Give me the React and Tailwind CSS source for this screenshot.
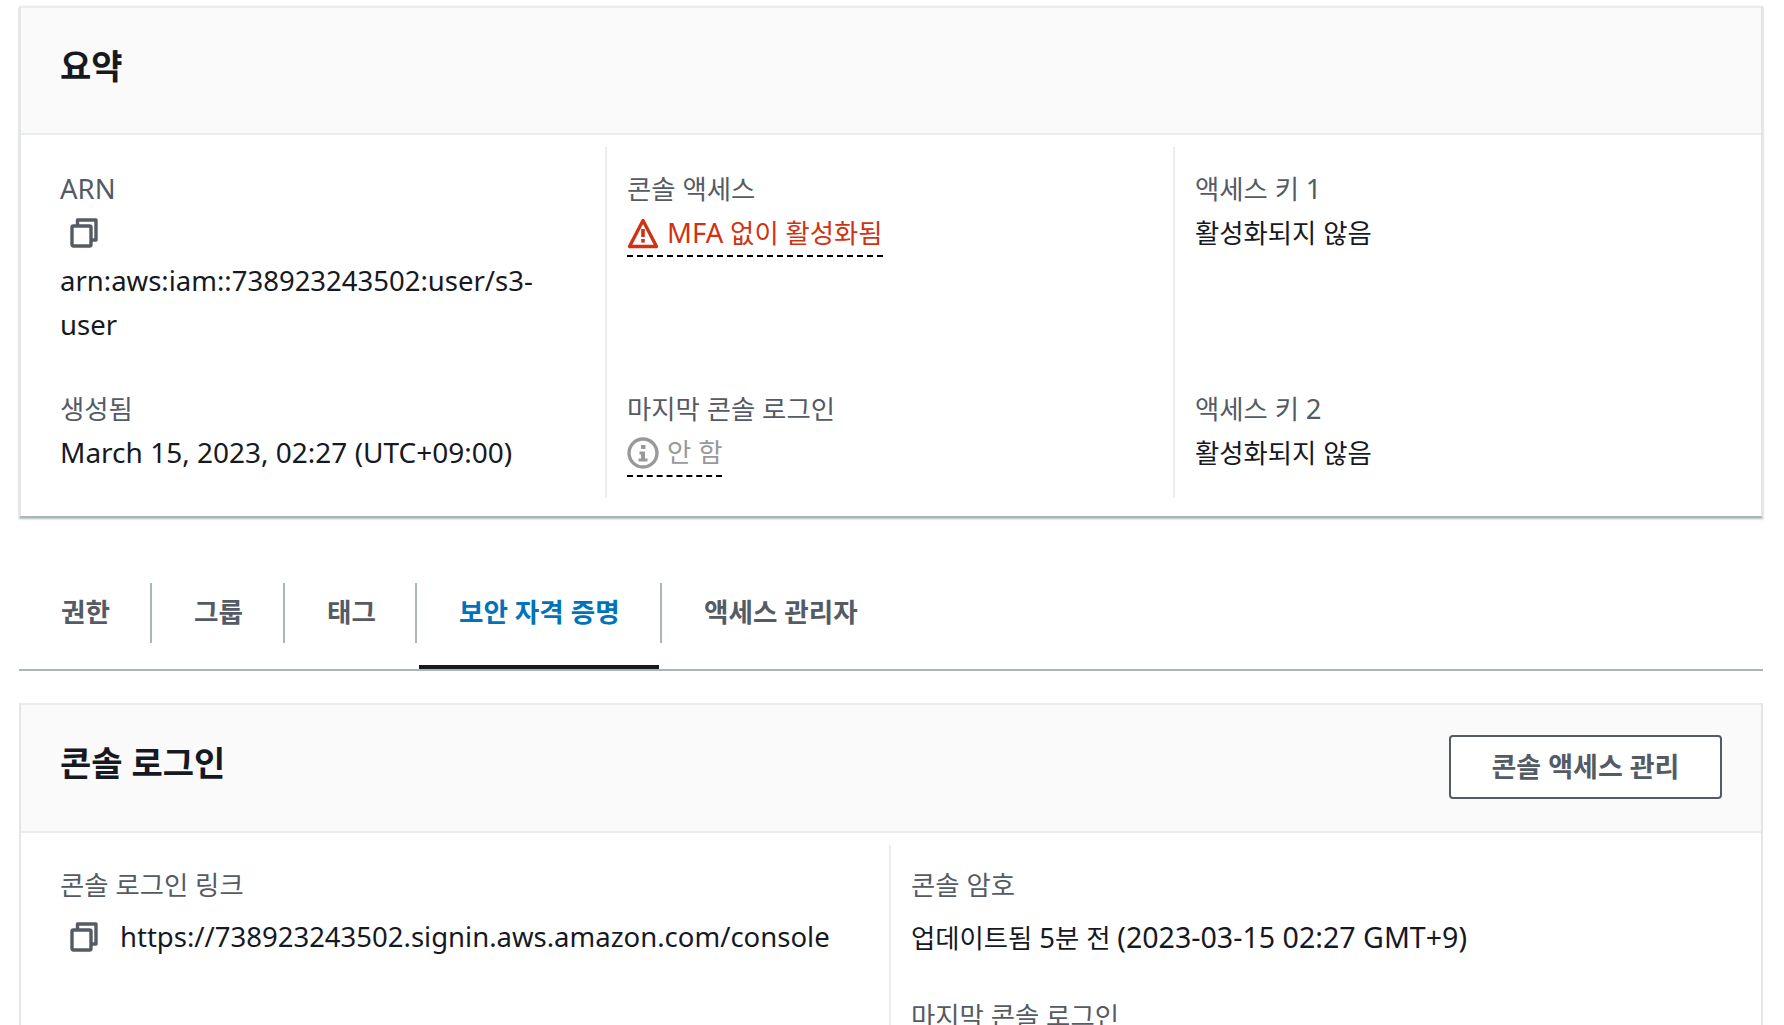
const FONT = 'font-["Noto_Sans","Noto_Sans_CJK_KR",sans-serif]';

function CopyIcon({ className = "" }) {
  return (
    <svg viewBox="0 0 28 30" className={"w-[28px] h-[30px] " + className} fill="none" stroke="#545b64" strokeWidth="3.4" strokeLinejoin="round">
      <rect x="2" y="8" width="19" height="20" rx="1.5" />
      <path d="M7.5 7V2h18.5v20h-4" />
    </svg>
  );
}

function WarnIcon() {
  return (
    <svg viewBox="0 0 32 32" className="w-[32px] h-[32px] shrink-0">
      <path d="M16 3.5L2.5 29.5h27z" fill="none" stroke="#d13212" strokeWidth="3.4" strokeLinejoin="round" />
      <rect x="14.2" y="12" width="3.6" height="8" fill="#d13212" />
      <rect x="14.2" y="22" width="3.6" height="3.6" fill="#d13212" />
    </svg>
  );
}

function InfoIcon() {
  return (
    <svg viewBox="0 0 32 32" className="w-[32px] h-[32px] shrink-0">
      <circle cx="16" cy="16" r="14" fill="none" stroke="#999999" strokeWidth="3.4" />
      <rect x="14" y="8" width="4.5" height="4" fill="#999999" />
      <path d="M12.5 14.5h5.5v7h2.5v3h-9v-3h2.5v-4h-1.5z" fill="#999999" />
    </svg>
  );
}

function L({ children, className = "text-[27.5px]" }) {
  return <span className={className}>{children}</span>;
}
function Label({ children }) {
  return <div className="text-[26.4px] leading-[44px] text-[#545b64]">{children}</div>;
}
function Value({ children }) {
  return <div className="text-[26.4px] leading-[44px] text-[#16191f]">{children}</div>;
}

function Card({ title, action, children, shadow }) {
  return (
    <section className={"bg-white border-x-2 border-[#e4e6e6] " + shadow}>
      <header className="bg-[#fafafa] border-y-2 border-[#eaeded] flex items-center justify-between pl-[39px] pr-[39px]">
        {title}
        {action}
      </header>
      {children}
    </section>
  );
}

export default function App() {
  const tabs = [
    { t: "권한", w: "w-[133px]" },
    { t: "그룹", w: "w-[133px]" },
    { t: "태그", w: "w-[132px]" },
    { t: "보안 자격 증명", w: "w-[245px]", active: true },
    { t: "액세스 관리자", w: "" },
  ];
  return (
    <div className={"h-[1025px] overflow-hidden bg-white pt-[6px] pl-[19px] pr-[21px] " + FONT}>
      <Card
        shadow="border-b-2 border-b-[#aab7b8] shadow-[0_1px_2px_rgba(0,28,36,0.3)]"
        title={<h2 className="text-[34px] font-bold text-[#16191f] h-[125px] leading-[116px]">요약</h2>}
      >
        <div className="grid grid-cols-[545px_568px_568px] pl-[39px] pt-[12px] pb-[18px] h-[381px]">
          <div className="flex flex-col pt-[20px]">
            <Label><L>ARN</L></Label>
            <div className="h-[48px] pl-[10px] pb-[5px] flex items-center"><CopyIcon /></div>
            <div className="w-[500px]"><Value><L>arn:aws:iam::738923243502:user/s3-user</L></Value></div>
            <div className="mt-[40px]"><Label>생성됨</Label></div>
            <div className="-mt-[1px]"><Value><L className="text-[28px]">March 15, 2023, 02:27 (UTC+09:00)</L></Value></div>
          </div>
          <div className="flex flex-col border-l-2 border-[#eaeded] pl-[20px] pt-[20px]">
            <Label>콘솔 액세스</Label>
            <div className="self-start flex items-center gap-[8px] border-b-2 border-dashed border-black h-[46px] text-[26.4px] text-[#d13212]">
              <WarnIcon />
              <span><L>MFA</L> 없이 활성화됨</span>
            </div>
            <div className="mt-[130px]"><Label>마지막 콘솔 로그인</Label></div>
            <div className="self-start flex items-center gap-[8px] border-b-2 border-dashed border-black h-[46px] text-[26.4px] text-[#999999]">
              <InfoIcon />
              <span>안 함</span>
            </div>
          </div>
          <div className="flex flex-col border-l-2 border-[#eaeded] pl-[20px] pt-[20px]">
            <Label>액세스 키 <L>1</L></Label>
            <Value>활성화되지 않음</Value>
            <div className="mt-[132px]"><Label>액세스 키 <L>2</L></Label></div>
            <Value>활성화되지 않음</Value>
          </div>
        </div>
      </Card>

      <nav className="mt-[51px] h-[102px] border-b-2 border-[#aab7b8] flex items-start pt-[14px]">
        {tabs.map((tab, i) => (
          <div key={tab.t} className={"relative h-[86px] " + tab.w}>
            <div
              className={
                "h-[60px] flex items-center pl-[42px] text-[26.6px] font-bold whitespace-nowrap " +
                (tab.active ? "text-[#0073bb] " : "text-[#545b64] ") +
                (i < tabs.length - 1 ? "border-r-2 border-[#aab7b8]" : "")
              }
            >
              {tab.t}
            </div>
            {tab.active && <div className="absolute left-[2px] right-[3px] bottom-0 h-[4px] bg-[#16191f]" />}
          </div>
        ))}
      </nav>

      <div className="mt-[32px]">
        <Card
          shadow=""
          title={<h2 className="text-[34px] font-bold text-[#16191f] h-[126px] leading-[116px]">콘솔 로그인</h2>}
          action={
            <button className="w-[273px] h-[64px] -mt-[2px] bg-white border-2 border-[#545b64] rounded-[4px] text-[27px] font-bold text-[#545b64]">
              콘솔 액세스 관리
            </button>
          }
        >
          <div className="grid grid-cols-[829px_1fr] pl-[39px] pt-[12px]">
            <div className="pt-[18px]">
              <Label>콘솔 로그인 링크</Label>
              <div className="flex items-center mt-[8px] gap-[22px] pl-[10px]">
                <CopyIcon />
                <Value><L>https://738923243502.signin.aws.amazon.com/console</L></Value>
              </div>
            </div>
            <div className="border-l-2 border-[#eaeded] pl-[20px] pt-[18px]">
              <Label>콘솔 암호</Label>
              <div className="mt-[8px]"><Value>업데이트됨 <L>5</L>분 전 <L className="text-[28.6px]">(2023-03-15 02:27 GMT+9)</L></Value></div>
              <div className="mt-[34px]"><Label>마지막 콘솔 로그인</Label></div>
            </div>
          </div>
        </Card>
      </div>
    </div>
  );
}
